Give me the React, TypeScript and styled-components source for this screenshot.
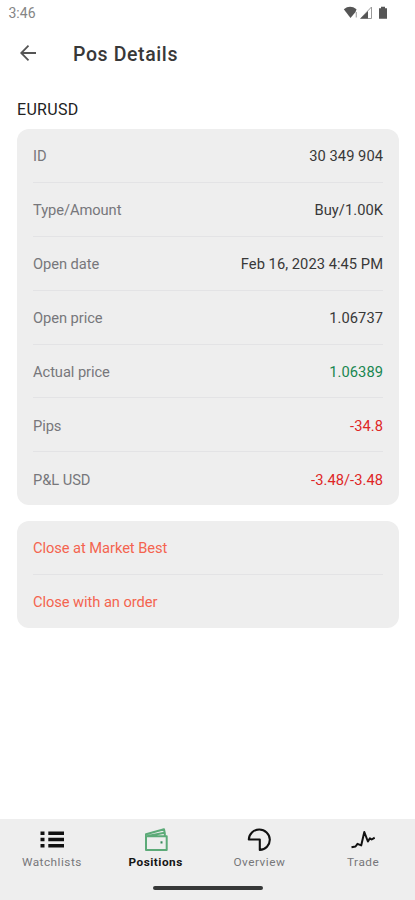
import React from 'react';
import styled, { createGlobalStyle } from 'styled-components';

const GlobalStyle = createGlobalStyle`
  * { box-sizing: border-box; }
  body { margin: 0; background: #fff; font-family: Roboto, "Liberation Sans", sans-serif; }
`;

const Screen = styled.div`
  display: flex;
  flex-direction: column;
  width: 415px;
  height: 900px;
  overflow: hidden;
  background: #fff;
`;

const StatusBar = styled.div`
  display: flex;
  align-items: center;
  justify-content: space-between;
  height: 26px;
  padding: 0 26px 0 8.5px;
`;

const Clock = styled.span`
  font-size: 14px;
  line-height: 26px;
  color: #858585;
`;

const Header = styled.header`
  display: flex;
  align-items: center;
  height: 54px;
  padding-left: 20px;
`;

const Title = styled.h1`
  margin: 2px 0 0 36px;
  font-size: 19.5px;
  font-weight: 500;
  letter-spacing: 0.6px;
  color: #383838;
`;

const Symbol = styled.h2`
  height: 49px;
  margin: 0;
  padding: 20px 0 0 17px;
  font-size: 16px;
  font-weight: 400;
  line-height: 19px;
  letter-spacing: 0.3px;
  color: #222;
`;

const Card = styled.section`
  flex: none;
  margin: 0 16px 16px 17px;
  padding: 0 16px;
  border-radius: 12px;
  background: #eee;
`;

const Row = styled.div`
  display: flex;
  align-items: center;
  justify-content: space-between;
  height: 53.9px;
  padding-top: 1.5px;
  font-size: 14.7px;
  border-bottom: 1px solid #e3e3e5;
  &:last-child {
    height: 52.9px;
    border-bottom: 0;
  }
`;

const Label = styled.span`
  letter-spacing: -0.07px;
  color: #77777b;
`;

const Value = styled.span<{ $color?: string }>`
  letter-spacing: 0.04px;
  color: ${(p) => p.$color ?? '#383838'};
`;

const Action = styled(Label)`
  color: #f4644f;
`;

const Nav = styled.nav`
  display: flex;
  flex-direction: column;
  align-items: center;
  height: 81px;
  margin-top: auto;
  background: #eee;
`;

const Tabs = styled.div`
  display: grid;
  grid-template-columns: repeat(4, 1fr);
  width: 100%;
  height: 67px;
  padding-top: 9px;
`;

const Tab = styled.div<{ $active?: boolean }>`
  display: flex;
  flex-direction: column;
  align-items: center;
  gap: 3px;
  font-size: 11.8px;
  line-height: 14px;
  letter-spacing: 0.5px;
  font-weight: ${(p) => (p.$active ? 700 : 400)};
  color: ${(p) => (p.$active ? '#151515' : '#77777a')};
`;

const HomeBar = styled.div`
  width: 110px;
  height: 4px;
  border-radius: 2px;
  background: #363838;
`;

const StatusIcons = () => (
  <svg width="46" height="16" viewBox="0 0 46 16">
    <path d="M.8 4.2Q7-.5 13.5 4.2L12.5 7 7.5 13Z" fill="#555" />
    <path d="M13.3 7v5.5" stroke="#aaa" strokeWidth="1.2" />
    <path d="M17.5 13.5L28.5 2v11.5z" fill="#fff" stroke="#999" />
    <path d="M17.5 13.5L25 6v7.5z" fill="#555" />
    <path d="M36 3.2h2V1.8h4v1.4h2v10.6h-8z" fill="#565656" />
  </svg>
);

const BackIcon = () => (
  <svg width="17" height="18" viewBox="0 0 17 18" fill="none" stroke="#555" strokeWidth="1.8">
    <path d="M16 9H1.5M8.5 1.7L1.2 9l7.3 7.3" />
  </svg>
);

const ListIcon = () => (
  <svg width="24" height="24" viewBox="0 0 24 24" fill="#111">
    <path d="M.5 3.5h4V7h-4zM.5 9.8h4v3.5h-4zM.5 16h4v3.5h-4zM8.3 3.5H24V7H8.3zM8.3 9.8H24v3.5H8.3zM8.3 16H24v3.5H8.3z" />
  </svg>
);

const WalletIcon = () => (
  <svg width="24" height="24" viewBox="0 0 24 24" fill="none" stroke="#5caa78" strokeWidth="2" strokeLinejoin="round">
    <path d="M2 8.3h20.7V22H2zM2 8.3V6.2L20 1.2l.8 4v3M3.5 8.1L20.5 4.8" />
    <path d="M16.5 13.3h2v2.2h-2z" fill="#36885a" stroke="none" />
  </svg>
);

const PieIcon = () => (
  <svg width="24" height="24" viewBox="0 0 24 24" fill="none" stroke="#111" strokeWidth="2.1" strokeLinejoin="round">
    <path d="M1.8 11.5A10.5 10.2 0 1 1 12.8 21.9V11.5Z" />
  </svg>
);

const TradeIcon = () => (
  <svg width="24" height="24" viewBox="0 0 24 24" fill="none" stroke="#111" strokeWidth="2" strokeLinejoin="round">
    <path d="M.5 19.2L4.5 18.5 6.5 15.8l3.7 1.6L13.3 4l3.6 9.5 2-3.2 1.8 1.2 3-1.8" />
  </svg>
);

const details = [
  { label: 'ID', value: '30 349 904' },
  { label: 'Type/Amount', value: 'Buy/1.00K' },
  { label: 'Open date', value: 'Feb 16, 2023 4:45 PM' },
  { label: 'Open price', value: '1.06737' },
  { label: 'Actual price', value: '1.06389', color: '#188650' },
  { label: 'Pips', value: '-34.8', color: '#df2626' },
  { label: 'P&L USD', value: '-3.48/-3.48', color: '#df2626' },
];

export default function App() {
  return (
    <>
      <GlobalStyle />
      <Screen>
        <StatusBar>
          <Clock>3:46</Clock>
          <StatusIcons />
        </StatusBar>
        <Header>
          <BackIcon />
          <Title>Pos Details</Title>
        </Header>
        <Symbol>EURUSD</Symbol>
        <Card>
          {details.map((d) => (
            <Row key={d.label}>
              <Label>{d.label}</Label>
              <Value $color={d.color}>{d.value}</Value>
            </Row>
          ))}
        </Card>
        <Card>
          <Row><Action>Close at Market Best</Action></Row>
          <Row><Action>Close with an order</Action></Row>
        </Card>
        <Nav>
          <Tabs>
            <Tab><ListIcon />Watchlists</Tab>
            <Tab $active><WalletIcon />Positions</Tab>
            <Tab><PieIcon />Overview</Tab>
            <Tab><TradeIcon />Trade</Tab>
          </Tabs>
          <HomeBar />
        </Nav>
      </Screen>
    </>
  );
}
